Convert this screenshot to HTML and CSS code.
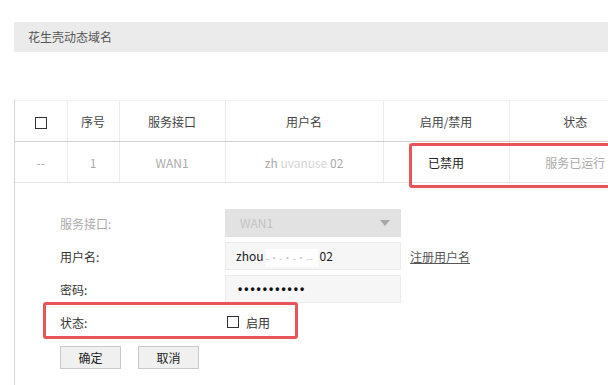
FILE: index.html
```html
<!DOCTYPE html>
<html lang="zh-CN">
<head>
    <meta charset="UTF-8">
    <meta name="viewport" content="width=device-width, initial-scale=1.0">
    <title>花生壳动态域名</title>
    <link rel="stylesheet" href="styles.css">
</head>
<body>
    <div class="page">
        <div class="panel-title">花生壳动态域名</div>

        <div class="list">
            <table class="grid">
                <colgroup>
                    <col class="c-check">
                    <col class="c-num">
                    <col class="c-wan">
                    <col class="c-user">
                    <col class="c-switch">
                    <col class="c-state">
                </colgroup>
                <thead>
                    <tr>
                        <th><span class="box"></span></th>
                        <th>序号</th>
                        <th>服务接口</th>
                        <th>用户名</th>
                        <th>启用/禁用</th>
                        <th>状态</th>
                    </tr>
                </thead>
                <tbody>
                    <tr>
                        <td>--</td>
                        <td>1</td>
                        <td>WAN1</td>
                        <td>zh <span class="mask">uvanuse</span> 02</td>
                        <td class="dark">已禁用</td>
                        <td>服务已运行</td>
                    </tr>
                </tbody>
            </table>
            <div class="mark mark-row"></div>

            <div class="edit">
                <div class="field">
                    <label class="off">服务接口:</label>
                    <div class="select">
                        <span>WAN1</span>
                        <span class="arrow"></span>
                    </div>
                </div>
                <div class="field">
                    <label>用户名:</label>
                    <div class="input">zhou<span class="blur">-·-·-·--</span>02</div>
                    <a class="link" href="#">注册用户名</a>
                </div>
                <div class="field">
                    <label>密码:</label>
                    <div class="input dots">•••••••••••</div>
                </div>
                <div class="field status">
                    <label>状态:</label>
                    <div class="check"><span class="box"></span>启用</div>
                    <div class="mark mark-status"></div>
                </div>
                <div class="actions">
                    <button class="btn">确定</button>
                    <button class="btn">取消</button>
                </div>
            </div>
        </div>
    </div>
</body>
</html>
```

FILE: styles.css
```css
html, body {
    overflow: hidden;
}

body {
    margin: 0;
    font-family: "Noto Sans CJK SC", "Liberation Sans", sans-serif;
    font-size: 12px;
    color: #333;
    background: #fff;
}

.page {
    width: 608px;
    height: 385px;
    box-sizing: border-box;
    padding: 22px 0 0 14px;
    overflow: hidden;
}

.panel-title {
    height: 30px;
    line-height: 30px;
    padding-left: 14px;
    background: #ebebeb;
    color: #555;
    font-size: 12px;
}

.list {
    position: relative;
    margin-top: 48px;
    border-left: 1px solid #d6d6d6;
    width: 640px;
    height: 300px;
}

.grid {
    border-collapse: collapse;
    table-layout: fixed;
    width: 626px;
}

.c-check { width: 52px; }
.c-num { width: 52px; }
.c-wan { width: 106px; }
.c-user { width: 158px; }
.c-switch { width: 126px; }
.c-state { width: 132px; }

.grid th,
.grid td {
    height: 40px;
    padding: 0;
    text-align: center;
    font-weight: normal;
    border-left: 1px solid #ececec;
}

.grid th:first-child,
.grid td:first-child {
    border-left: none;
}

.grid th {
    border-top: 1px solid #f0f0f0;
    border-bottom: 1px solid #cfcfcf;
    color: #444;
}

.grid td {
    border-bottom: 1px solid #e4e4e4;
    color: #aaa;
}

.grid td.dark {
    color: #222;
}

.mask {
    color: #d4d4d4;
}

.box {
    display: inline-block;
    width: 10px;
    height: 10px;
    border: 1.5px solid #333;
    vertical-align: middle;
}

.mark {
    position: absolute;
    border: 3px solid #e9545b;
    border-radius: 3px;
    pointer-events: none;
}

.mark-row {
    left: 394px;
    top: 43px;
    width: 220px;
    height: 39px;
}

.edit {
    padding: 26px 0 0 45px;
}

.field {
    display: flex;
    align-items: center;
    height: 28px;
    margin-bottom: 5px;
}

.field label {
    width: 165px;
    color: #333;
}

.field label.off {
    color: #aaa;
}

.select,
.input {
    box-sizing: border-box;
    width: 176px;
    height: 28px;
    line-height: 26px;
    border: 1px solid #ececec;
    background: #f6f6f6;
    color: #222;
}

.select {
    display: flex;
    justify-content: space-between;
    align-items: center;
    padding: 0 10px 0 14px;
    background: #e2e2e2;
    border-color: #e2e2e2;
    color: #c2c2c2;
}

.arrow {
    width: 0;
    height: 0;
    border-left: 5px solid transparent;
    border-right: 5px solid transparent;
    border-top: 6px solid #a9a9a9;
}

.input {
    padding-left: 10px;
}

.blur {
    display: inline-block;
    width: 52px;
    background: #fff;
    color: #c8c8c8;
    font-size: 10px;
    line-height: 18px;
    margin: 0 2px;
    vertical-align: middle;
}

.dots {
    padding-left: 12px;
    font-family: "Liberation Sans", sans-serif;
    font-size: 12px;
    font-weight: bold;
    letter-spacing: 2px;
    color: #111;
}

.link {
    margin-left: 9px;
    color: #555;
    text-decoration: underline;
}

.status {
    position: relative;
    margin-top: 5px;
}

.check {
    display: flex;
    align-items: center;
    gap: 7px;
    padding-left: 2px;
}

.mark-status {
    left: -17px;
    top: -6px;
    width: 249px;
    height: 31px;
}

.actions {
    display: flex;
    gap: 17px;
    margin-top: 10px;
}

.btn {
    width: 61px;
    height: 23px;
    padding: 0;
    font-family: inherit;
    font-size: 12px;
    color: #222;
    background: #f0f0f0;
    border: 1px solid #c9c9c9;
}
```
